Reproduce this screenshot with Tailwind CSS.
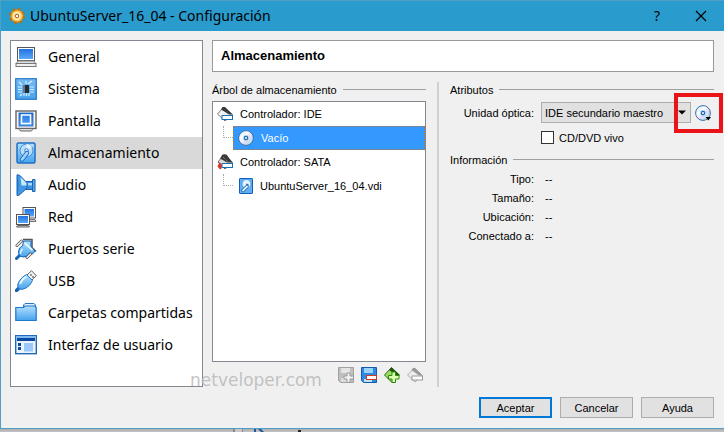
<!DOCTYPE html>
<html lang="es">
 <head>
  <meta charset="UTF-8" />
  <meta name="viewport" content="width=device-width, initial-scale=1.0" />
  <script src="https://cdn.jsdelivr.net/npm/@tailwindcss/browser@4"></script>
  <title>UbuntuServer_16_04 - Configuración</title>
 </head>
 <body class="h-screen flex flex-col overflow-hidden bg-[#b9babd] font-['Liberation_Sans',sans-serif] text-[11px] leading-4 text-black">
  <!-- Shared gradients and icons -->
  <svg class="absolute w-0 h-0" aria-hidden="true">
   <defs>
    <linearGradient id="blue" x1="0" y1="0" x2="0" y2="1">
     <stop offset="0" stop-color="#2272e0" />
     <stop offset="1" stop-color="#5aa8fa" />
    </linearGradient>
    <linearGradient id="sky" x1="0" y1="0" x2="0" y2="1">
     <stop offset="0" stop-color="#b4e0fc" />
     <stop offset="1" stop-color="#45a3ee" />
    </linearGradient>
    <linearGradient id="disc" x1="0" y1="0" x2="1" y2="1">
     <stop offset="0" stop-color="#a8dcf4" />
     <stop offset="0.35" stop-color="#ffffff" />
     <stop offset="0.6" stop-color="#e0dcf8" />
     <stop offset="1" stop-color="#9be4dc" />
    </linearGradient>
    <symbol id="cd" viewBox="0 0 16 16">
     <circle cx="8" cy="8" r="7.400" fill="url(#disc)" stroke="#3a6ea8" />
     <circle cx="8" cy="8" r="3" fill="#b4d8f6" />
     <circle cx="8" cy="8" r="1.600" fill="#fff" stroke="#2269b4" stroke-width="1.200" />
    </symbol>
    <symbol id="disk" viewBox="0 0 20 22">
     <rect x="1" y="1" width="18" height="20" rx="1.500" fill="url(#sky)" stroke="#1f70c4" stroke-width="1.500" />
     <circle cx="10.500" cy="8.500" r="6.500" fill="#b8defa" stroke="#3f8edc" />
     <path d="M10.500 2a6.500 6.500 0 0 1 5.500 3l-5.500 3.500z" fill="#e6f5ff" />
     <circle cx="10.500" cy="8.500" r="1.800" fill="#fff" stroke="#2a7bd0" />
     <path d="M11 11L6 17.500" stroke="#1f70c4" stroke-width="4.500" stroke-linecap="round" />
     <path d="M11 11L6 17.500" stroke="#a9d7fb" stroke-width="2.500" stroke-linecap="round" />
    </symbol>
    <symbol id="disk-small" viewBox="0 0 16 16">
     <rect x="1.500" y="0.500" width="13" height="15" rx="0.500" fill="#5fb0f6" stroke="#1460b0" />
     <circle cx="8.500" cy="6" r="4.500" fill="#dff2ff" stroke="#2a7bd0" stroke-width="0.600" />
     <path d="M8.500 6l2 1.500" stroke="#1460b0" stroke-width="1.500" />
     <path d="M9 8.500l-4 4" stroke="#1460b0" stroke-width="3.400" stroke-linecap="round" />
     <path d="M9 8.500l-4 4" stroke="#dff2ff" stroke-width="1.800" stroke-linecap="round" />
    </symbol>
   </defs>
  </svg>

  <div class="flex-1 flex flex-col min-h-0 bg-[#f0f0f0] border-t border-l border-b border-[#4e9fc6]">
   <header class="h-[30px] shrink-0 flex items-center bg-[#2a9bcd] pl-2 pr-3.5 font-['Noto_Sans',sans-serif]">
    <svg class="w-4 h-4" viewBox="0 0 16 16" aria-hidden="true">
     <circle cx="8" cy="8" r="6.500" fill="#e8981e" stroke="#b8700e" stroke-width="3" stroke-dasharray="2.600 2.500" />
     <circle cx="8" cy="8" r="6" fill="#fbc050" stroke="#d8860e" stroke-width="0.800" />
     <circle cx="8" cy="8" r="4.300" fill="#ffe9b0" />
     <circle cx="8" cy="8" r="1.800" fill="#fff" stroke="#a85a0c" />
    </svg>
    <h1 class="ml-[5px] flex-1 text-[14px] leading-5">UbuntuServer_16_04 - Configuración</h1>
    <button type="button" class="w-5 text-[14px] leading-5 mr-7" aria-label="Ayuda contextual">?</button>
    <button type="button" class="w-3.5 mr-px" aria-label="Cerrar">
     <svg class="w-3 h-3" viewBox="0 0 12 12" fill="none" stroke="#000" stroke-width="1.200">
      <path d="M1 1L11 11M11 1L1 11" />
     </svg>
    </button>
   </header>

   <main class="flex-1 min-h-0 flex gap-[9px] pt-[9px] pl-[9px] pr-2.5">
    <nav class="w-[193px] h-[347px] shrink-0 bg-white border border-[#828790] font-['Noto_Sans',sans-serif] text-[14px] leading-5">
     <button type="button" class="w-full h-8 flex items-center gap-[11px] pl-1 text-left">
      <svg class="w-[22px] h-[22px]" viewBox="0 0 22 22" aria-hidden="true">
       <rect x="2.500" y="1.500" width="17" height="13" fill="#fff" stroke="#585858" />
       <rect x="4" y="3" width="14" height="10" fill="url(#blue)" />
       <path d="M3 15h16l2 3H1z" fill="#e0e0e0" stroke="#888" />
       <rect x="1" y="17.500" width="20" height="3" fill="#f0f0f0" stroke="#777" />
      </svg>
      General
     </button>
     <button type="button" class="w-full h-8 flex items-center gap-[11px] pl-1 text-left">
      <svg class="w-[22px] h-[22px]" viewBox="0 0 22 22" aria-hidden="true">
       <rect x="0.800" y="0.800" width="20.400" height="20.400" fill="url(#sky)" stroke="#2877c4" stroke-width="1.400" />
       <rect x="1.500" y="1.500" width="19" height="19" fill="#4ba3ee" fill-opacity="0.600" />
       <path d="M3 9h4M3 11.500h4M3 14h4M15 9h4M15 11.500h4M15 14h4M9 18v-3M11.500 18v-3M14 18v-3M11 3v3M13 6l4-3M4 4l3 3M5 18l2-2" stroke="#d6f0ff" stroke-width="1.200" />
       <rect x="8" y="7" width="6" height="8" fill="#252b33" />
       <rect x="8" y="7" width="2" height="8" fill="#69798c" />
      </svg>
      Sistema
     </button>
     <button type="button" class="w-full h-8 flex items-center gap-[11px] pl-1 text-left">
      <svg class="w-[22px] h-[22px]" viewBox="0 0 22 22" aria-hidden="true">
       <rect x="1" y="1" width="20" height="17.500" fill="#f5f5f5" stroke="#666" stroke-width="1.400" />
       <rect x="4" y="3" width="14" height="13" fill="url(#blue)" stroke="#1a5fb4" stroke-width="0.800" />
       <rect x="6.500" y="5" width="9" height="8.500" fill="none" stroke="#fff" stroke-width="1.500" />
       <path d="M4 19.500l2 1.500h10l2-1.500" fill="#ddd" stroke="#666" />
      </svg>
      Pantalla
     </button>
     <button type="button" class="w-full h-8 flex items-center gap-[11px] pl-1 text-left bg-[#d9d9d9]" aria-current="page">
      <svg class="w-[22px] h-[22px]" aria-hidden="true"><use href="#disk" /></svg>
      Almacenamiento
     </button>
     <button type="button" class="w-full h-8 flex items-center gap-[11px] pl-1 text-left">
      <svg class="w-[22px] h-[22px]" viewBox="0 0 22 22" aria-hidden="true">
       <path d="M11 7.500h7v8h-7z" fill="#3d8ee0" stroke="#1d62b0" />
       <path d="M17.500 5.500h2.500v12h-2.500z" fill="#5aa9ee" stroke="#1d62b0" />
       <path d="M2 0.800q2.500 0 3.500 1.200l6.500 7v5l-6.500 6q-1 1.500-3.500 1.500z" fill="#3f98e6" stroke="#1d62b0" />
       <path d="M5.500 3l6 6v2.500H6.500z" fill="#c4e8fc" />
       <path d="M2 1.500q3 9.500 0 19.500z" fill="#1f6fc6" />
       <path d="M13 9h4v2.500h-4z" fill="#a6d8fa" />
      </svg>
      Audio
     </button>
     <button type="button" class="w-full h-8 flex items-center gap-[11px] pl-1 text-left">
      <svg class="w-[22px] h-[22px]" viewBox="0 0 22 22" aria-hidden="true">
       <path d="M10 13.500h10l1 2H10z" fill="#ccc" stroke="#777" />
       <rect x="8" y="1.500" width="12.500" height="10.500" fill="#fff" stroke="#555" />
       <rect x="9.500" y="3" width="9.500" height="7.500" fill="url(#blue)" />
       <path d="M2.500 19.500h11l1 1.500h-13z" fill="#ccc" stroke="#666" />
       <rect x="1.500" y="8.500" width="13" height="10" fill="#fff" stroke="#555" />
       <rect x="3" y="10" width="10" height="7" fill="url(#blue)" />
      </svg>
      Red
     </button>
     <button type="button" class="w-full h-8 flex items-center gap-[11px] pl-1 text-left">
      <svg class="w-[22px] h-[22px]" viewBox="0 0 22 22" aria-hidden="true">
       <path d="M8 1.500h9v8l4 4" fill="none" stroke="#555" stroke-width="1.500" />
       <path d="M1.500 20.500l3.500-3.500" stroke="#1565b4" stroke-width="3" stroke-linecap="round" />
       <path d="M8.500 3h7.500v6l4 4-2.500 3-3-1-2 3q-4 2-8 0-2-4 0-8l3-2z" fill="url(#sky)" stroke="#1565b4" />
       <path d="M9.500 5L17.500 12" stroke="#e0f4ff" stroke-width="2" />
       <path d="M2 7.500L6.500 3M12 19.500l3.500-3.500" stroke="#555" stroke-width="3" stroke-linecap="round" />
       <path d="M2 7.500L6.500 3M12 19.500l3.500-3.500" stroke="#f0f0f0" stroke-width="1.500" stroke-linecap="round" />
       <path d="M7.500 11q-2 2-2 5" stroke="#e6f6ff" stroke-width="1.500" fill="none" />
      </svg>
      Puertos serie
     </button>
     <button type="button" class="w-full h-8 flex items-center gap-[11px] pl-1 text-left">
      <svg class="w-[22px] h-[22px]" viewBox="0 0 22 22" aria-hidden="true">
       <path d="M12 5l4.500-4.300 4.800 5L17 10z" fill="#f2f2f2" stroke="#666" />
       <path d="M15.500 4.500l1 1M17.500 6.500l1 1" stroke="#333" stroke-width="1.300" />
       <path d="M1.500 20.500l2.500-2.500" stroke="#1565b4" stroke-width="3.500" stroke-linecap="round" />
       <path d="M11.500 4.500l6 6q-2 5-6.500 7.500-4 2.500-7.500.5-2-3.500.5-7 3-5 7.500-7z" fill="url(#sky)" stroke="#2877c4" />
       <path d="M11.500 6.500Q7 9 5 14" stroke="#e6f6ff" stroke-width="2" fill="none" />
      </svg>
      USB
     </button>
     <button type="button" class="w-full h-8 flex items-center gap-[11px] pl-1 text-left">
      <svg class="w-[22px] h-[22px]" viewBox="0 0 22 22" aria-hidden="true">
       <path d="M8.500 5V3l1.500-1.500h9L20.500 3v4h-12z" fill="#d9effd" stroke="#2877c4" />
       <path d="M0.800 5.500h7.700l1.500-1.500h9.500l1.700 1.500v13H0.800z" fill="url(#sky)" stroke="#1f78c8" stroke-width="1.200" />
      </svg>
      Carpetas compartidas
     </button>
     <button type="button" class="w-full h-8 flex items-center gap-[11px] pl-1 text-left">
      <svg class="w-[22px] h-[22px]" viewBox="0 0 22 22" aria-hidden="true">
       <rect x="0.700" y="1.700" width="20.600" height="18" fill="#e9f4fe" stroke="#2468b8" stroke-width="1.400" />
       <path d="M1 2h20v2H1z" fill="#7db8ee" />
       <path d="M2 4h18v3H2zM3 9h3v3H3zM3 13h3v3H3z" fill="#0b48a0" />
       <rect x="9" y="9" width="9" height="8.500" fill="#9cc8fc" />
      </svg>
      Interfaz de usuario
     </button>
    </nav>

    <div class="flex-1 min-w-0 flex flex-col">
     <h2 class="h-8 shrink-0 flex items-center border border-[#999] bg-white pl-2 text-[13px] leading-5 font-bold">Almacenamiento</h2>

     <div class="flex pt-2.5">
      <section class="w-[214px] shrink-0">
       <div class="h-[15px] flex items-center gap-1.5">
        <h3>Árbol de almacenamiento</h3>
        <div class="flex-1 h-px bg-[#a0a0a0]"></div>
       </div>
       <ul class="mt-1 h-[261px] bg-white border border-[#828790]">
        <li class="h-6 flex items-center gap-[7px] pl-1">
         <svg class="w-4 h-4" viewBox="0 0 16 16" aria-hidden="true">
          <path d="M7 1L15.500 8.500 8 15 0.500 8z" fill="#f4f4f4" stroke="#777" />
          <path d="M5.500 1h2.500l7.500 7.500H12L4 3.500z" fill="#3a3a3a" />
          <rect x="5" y="9.500" width="10.500" height="4" fill="#fff" stroke="#1672b8" />
         </svg>
         Controlador: IDE
        </li>
        <li class="h-6 flex">
         <span class="ml-2.5 w-2.5 h-3 border-l border-b border-dotted border-[#aaa]"></span>
         <button type="button" class="flex-1 flex items-center gap-[7px] pl-1 text-left bg-[#3399ff] border border-dotted border-[#b87230] text-white">
          <svg class="w-4 h-4" aria-hidden="true"><use href="#cd" /></svg>
          Vacío
         </button>
        </li>
        <li class="h-6 flex items-center gap-[7px] pl-1">
         <svg class="w-4 h-4" viewBox="0 0 16 16" aria-hidden="true">
          <path d="M7 0.500L15.500 8.500 8 15 1 8z" fill="#ddd" stroke="#666" />
          <path d="M5.500 0.500h4l6 8H10L3 4.500z" fill="#3a3a3a" />
          <path d="M6 3l5 5" stroke="#999" stroke-dasharray="1 1" />
          <path d="M2.500 8l2.500 3-.5 3.500-1.500 1L.5 12.500z" fill="#e03020" />
          <rect x="5" y="9.500" width="10.500" height="4" fill="#fff" stroke="#1672b8" />
         </svg>
         Controlador: SATA
        </li>
        <li class="h-6 flex">
         <span class="ml-2.5 w-2.5 h-3 border-l border-b border-dotted border-[#aaa]"></span>
         <button type="button" class="flex-1 flex items-center gap-1.5 pl-1 text-left border border-transparent">
          <svg class="w-4 h-4" aria-hidden="true"><use href="#disk-small" /></svg>
          UbuntuServer_16_04.vdi
         </button>
        </li>
       </ul>
       <div class="mt-[5px] pr-[3px] flex justify-end gap-[7px]">
        <button type="button" aria-label="Agregar conexión">
         <svg class="w-4 h-4" viewBox="0 0 16 16">
          <path d="M0.500 0.500h15v15h-13l-2-2z" fill="#c0c0c0" stroke="#a0a0a0" />
          <path d="M3 1h9v5H3z" fill="#e4e4e4" />
          <path d="M3 11h6v4H3z" fill="#ddd" />
          <path d="M9 6h3v3h3.500v3H12v3.500H9V12H6V9h3z" fill="#f2f2f2" stroke="#999" />
         </svg>
        </button>
        <button type="button" aria-label="Eliminar conexión">
         <svg class="w-4 h-4" viewBox="0 0 16 16">
          <path d="M0.500 0.500h15v15h-13l-2-2z" fill="#2f8ae6" stroke="#155ca8" />
          <path d="M3 1h9v5H3z" fill="#9ad2fa" />
          <path d="M3 12h8v3H3z" fill="#c0dff8" />
          <rect x="5.500" y="8.500" width="10" height="4" fill="#fff" stroke="#cf3b20" />
         </svg>
        </button>
        <button type="button" aria-label="Agregar controlador">
         <svg class="w-4 h-4" viewBox="0 0 16 16">
          <path d="M7.500 0.500L15.500 8 8 15.500 0.500 8z" fill="#9adf62" stroke="#266a10" />
          <path d="M7.500 0.500L15.500 8l-2 1L5 3z" fill="#235312" />
          <path d="M8 5h3.500v3.500H15V12h-3.500v3.500H8V12H4.500V8.500H8z" fill="#dcffb4" stroke="#2a8a08" />
         </svg>
        </button>
        <button type="button" aria-label="Eliminar controlador">
         <svg class="w-4 h-4" viewBox="0 0 16 16">
          <path d="M7.500 1L15.500 8.500 8 15 0.500 8z" fill="#eee" stroke="#aaa" />
          <path d="M6 1h2l7.500 7.500H12L4.500 3z" fill="#999" />
          <rect x="5" y="9" width="10.500" height="4" fill="#fff" stroke="#999" />
         </svg>
        </button>
       </div>
      </section>

      <div class="mx-[11px] w-0.5 h-[305px] bg-[#d0d0d0]"></div>

      <section class="flex-1 min-w-0">
       <div class="h-[15px] flex items-center gap-1.5">
        <h3>Atributos</h3>
        <div class="flex-1 h-px bg-[#a0a0a0]"></div>
       </div>
       <div class="mt-[5px] flex items-center h-[21px]">
        <label for="drive" class="w-[84px] text-right">Unidad óptica:</label>
        <div class="relative ml-[7px] w-[150px]">
         <select id="drive" class="block appearance-none w-full h-[21px] border border-[#adadad] bg-[#e1e1e1] pl-[3px]">
          <option>IDE secundario maestro</option>
         </select>
         <svg class="absolute right-[5px] top-2 w-2 h-[5px] pointer-events-none" viewBox="0 0 8 5" aria-hidden="true">
          <path d="M0 0.500h8L4 4.500z" />
         </svg>
        </div>
        <div class="relative ml-1 w-4 h-4">
         <button type="button" class="block" aria-label="Elegir disco óptico">
          <svg class="w-4 h-4" viewBox="0 0 16 16">
           <use href="#cd" />
           <path d="M10.500 12h5.500l-2.700 3.500z" />
          </svg>
         </button>
         <!-- Highlight around the disc chooser -->
         <div class="absolute -top-3 -left-[21px] w-[49px] h-10 border-4 border-[#ea1418] pointer-events-none"></div>
        </div>
       </div>
       <div class="mt-2 ml-[91px] flex items-center h-[13px] gap-[5px]">
        <input type="checkbox" id="live" class="appearance-none w-[13px] h-[13px] bg-white border border-[#333]" />
        <label for="live">CD/DVD vivo</label>
       </div>

       <div class="mt-2 h-[15px] flex items-center gap-1.5">
        <h3>Información</h3>
        <div class="flex-1 h-px bg-[#a0a0a0]"></div>
       </div>
       <dl class="mt-1 grid grid-cols-[84px_1fr] gap-x-[11px] gap-y-[3px]">
        <dt class="text-right">Tipo:</dt>
        <dd>--</dd>
        <dt class="text-right">Tamaño:</dt>
        <dd>--</dd>
        <dt class="text-right">Ubicación:</dt>
        <dd>--</dd>
        <dt class="text-right">Conectado a:</dt>
        <dd>--</dd>
       </dl>
      </section>
     </div>
    </div>
   </main>

   <footer class="shrink-0 flex justify-end gap-2 pr-2.5 pb-2.5">
    <button type="button" class="w-[73px] h-[21px] flex items-center justify-center border-2 border-[#0078d7] bg-[#e1e1e1]">Aceptar</button>
    <button type="button" class="w-[73px] h-[21px] flex items-center justify-center border border-[#adadad] bg-[#e1e1e1]">Cancelar</button>
    <button type="button" class="w-[73px] h-[21px] flex items-center justify-center border border-[#adadad] bg-[#e1e1e1]">Ayuda</button>
   </footer>
  </div>

  <!-- Sliver of the window behind -->
  <div class="h-[3px] shrink-0 flex bg-linear-to-b from-[#aeaeb0] to-[#c4c4c6]">
   <div class="w-[235px] border-r-2 border-[#8a8a8c]"></div>
   <div class="w-2 border-r border-[#8a8a8c] bg-[#c8c8ca]"></div>
   <div class="ml-[11px] w-0.5 bg-[#1f5a9c]"></div>
   <svg class="ml-0.5 w-2 h-[3px]" viewBox="0 0 8 3" aria-hidden="true"><path d="M0 0h3l3 3H3z" fill="#1f5a9c" /></svg>
   <div class="ml-8 w-[3px] h-0.5 self-end bg-[#222]"></div>
  </div>

  <p class="absolute left-[190px] top-[368px] font-['DejaVu_Sans',sans-serif] text-[17px] leading-6 text-[#b4b4b4]/80 pointer-events-none">netveloper.com</p>
 </body>
</html>
